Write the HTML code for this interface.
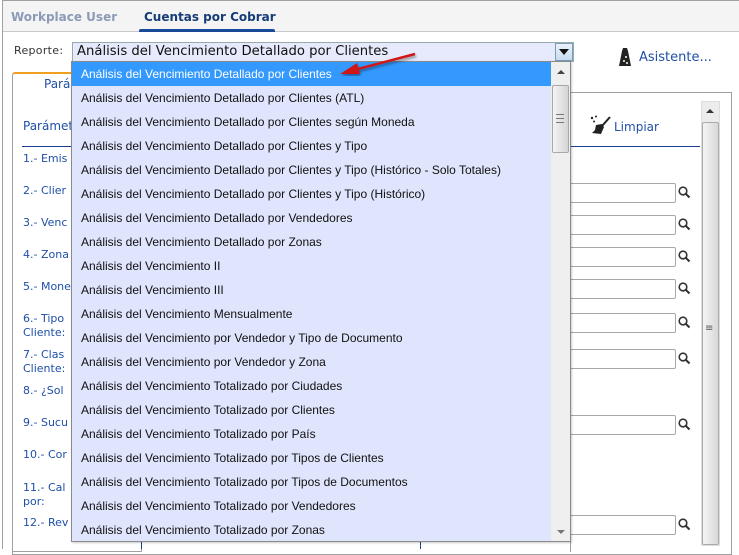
<!DOCTYPE html>
<html><head><meta charset="utf-8"><style>
*{box-sizing:border-box;margin:0;padding:0}
body{width:739px;height:549px;overflow:hidden;background:#fff;position:relative;font-family:"DejaVu Sans",Verdana,sans-serif}
.a{position:absolute}
.lbl{position:absolute;left:23px;font-size:11px;color:#1f4fa8;line-height:14px}
.inp{position:absolute;left:520px;width:156px;height:20px;border:1px solid #a8a8a8;border-radius:2px;background:#fff}
.mag{position:absolute;left:678px}
.it{position:absolute;left:72px;width:479px;height:24px;font-family:"Liberation Sans",Arial,sans-serif;font-size:12px;line-height:25px;padding-left:9px;color:#111;white-space:nowrap}
</style></head><body>
<div class="a" style="left:2px;top:0;width:737px;height:549px;border-left:1px solid #a0a0a0;border-top:1px solid #a0a0a0;background:#fff"></div>
<div class="a" style="left:3px;top:1px;width:736px;height:31px;background:#f4f4f4;border-bottom:1px solid #c8c8c8"></div>
<div class="a" style="left:11px;top:10px;font-size:12px;font-weight:bold;color:#8c9ab8">Workplace User</div>
<div class="a" style="left:144px;top:10px;font-size:12px;font-weight:bold;color:#163c78">Cuentas por Cobrar</div>
<div class="a" style="left:139px;top:29px;width:136px;height:3px;background:#1a4a9a;border-radius:2px 2px 0 0"></div>

<div class="a" style="left:14px;top:44px;font-size:11px;color:#333;letter-spacing:.3px">Reporte:</div>
<div class="a" style="left:72px;top:42px;width:502px;height:20px;border:1px solid #9aa;background:#e6eafc"></div>
<div class="a" style="left:77px;top:44px;font-size:13.2px;color:#111;white-space:nowrap">Análisis del Vencimiento Detallado por Clientes</div>
<div class="a" style="left:555px;top:43px;width:18px;height:18px;border:1px solid #7b9ebd;background:linear-gradient(#eaf2fb,#c7dcef)"></div>
<div class="a" style="left:559px;top:49px;width:0;height:0;border-left:5px solid transparent;border-right:5px solid transparent;border-top:6px solid #111"></div>

<svg class="a" style="left:618px;top:47px" width="14" height="20" viewBox="0 0 14 20"><path d="M5 1h4l1 3 3 15H1L4 4z" fill="#222"/><circle cx="8" cy="10" r="1" fill="#fff"/><circle cx="6" cy="14" r="1" fill="#fff"/><circle cx="9" cy="16" r="1" fill="#fff"/></svg>
<div class="a" style="left:639px;top:50px;font-size:13px;color:#1f4fa8">Asistente...</div>

<div class="a" style="left:12px;top:72px;width:130px;height:480px;border:1px solid #a0a0a0;border-top:2px solid #f0a020;border-radius:3px 3px 0 0"></div>
<div class="a" style="left:44px;top:77px;font-size:12px;color:#1f4fa8">Pará</div>
<div class="a" style="left:12px;top:95px;width:720px;height:460px;border:1px solid #a0a0a0;border-top:none"></div>
<div class="a" style="left:570px;top:92px;width:162px;height:460px;border:1px solid #a0a0a0;border-bottom:none"></div>
<div class="a" style="left:23px;top:119px;font-size:12px;color:#1f4fa8">Parámet</div>
<div class="a" style="left:22px;top:146px;width:678px;height:1px;background:#1a3f8f"></div>
<svg class="a" style="left:590px;top:115px" width="22" height="22" viewBox="0 0 22 22"><path d="M20 2L12 11" stroke="#222" stroke-width="2"/><path d="M6 10l6-1 2 3-3 7-9-1 3-3z" fill="#222"/><circle cx="2" cy="3" r="1.2" fill="#222"/><circle cx="6" cy="1.5" r="1" fill="#222"/><circle cx="4" cy="6.5" r="1" fill="#222"/></svg>
<div class="a" style="left:614px;top:120px;font-size:12px;color:#1f4fa8">Limpiar</div>
<div class="a" style="left:701px;top:101px;width:19px;height:445px;background:#ececec;border:1px solid #ddd"></div>
<div class="a" style="left:706px;top:109px;border-left:4px solid transparent;border-right:4px solid transparent;border-bottom:4px solid #333"></div>
<div class="a" style="left:702px;top:122px;width:17px;height:423px;background:linear-gradient(90deg,#f4f4f4,#d8d8d8);border:1px solid #aaa;border-radius:2px"></div>
<div class="a" style="left:705px;top:327px;font-size:10px;line-height:4px;color:#555">≡</div>
<div class="a" style="left:141px;top:540px;width:1px;height:9px;background:#1a3f8f"></div>
<div class="a" style="left:420px;top:540px;width:1px;height:9px;background:#1a3f8f"></div>

<div class="lbl" style="top:152px">1.- Emis</div>
<div class="lbl" style="top:184px">2.- Clier</div>
<div class="lbl" style="top:216px">3.- Venc</div>
<div class="lbl" style="top:248px">4.- Zona</div>
<div class="lbl" style="top:280px">5.- Mone</div>
<div class="lbl" style="top:312px">6.- Tipo<br>Cliente:</div>
<div class="lbl" style="top:348px">7.- Clas<br>Cliente:</div>
<div class="lbl" style="top:384px">8.- ¿Sol</div>
<div class="lbl" style="top:416px">9.- Sucu</div>
<div class="lbl" style="top:448px">10.- Cor</div>
<div class="lbl" style="top:481px">11.- Cal<br>por:</div>
<div class="lbl" style="top:516px">12.- Rev</div>

<div class="inp" style="top:183px"></div><div class="inp" style="top:215px"></div><div class="inp" style="top:247px"></div>
<div class="inp" style="top:279px"></div><div class="inp" style="top:313px"></div><div class="inp" style="top:349px"></div>
<div class="inp" style="top:415px"></div><div class="inp" style="top:515px"></div>
<svg width="0" height="0"><defs><g id="m"><circle cx="5" cy="5" r="3.8" stroke="#333" stroke-width="1.6" fill="none"/><path d="M7.5 7.5l4 4" stroke="#333" stroke-width="2"/></g></defs></svg>
<svg class="mag" style="top:186px" width="13" height="13"><use href="#m"/></svg>
<svg class="mag" style="top:218px" width="13" height="13"><use href="#m"/></svg>
<svg class="mag" style="top:250px" width="13" height="13"><use href="#m"/></svg>
<svg class="mag" style="top:282px" width="13" height="13"><use href="#m"/></svg>
<svg class="mag" style="top:316px" width="13" height="13"><use href="#m"/></svg>
<svg class="mag" style="top:352px" width="13" height="13"><use href="#m"/></svg>
<svg class="mag" style="top:418px" width="13" height="13"><use href="#m"/></svg>
<svg class="mag" style="top:518px" width="13" height="13"><use href="#m"/></svg>

<div class="a" style="left:71px;top:61px;width:500px;height:481px;background:#dfe5fc;border:1px solid #8a8a8a;box-shadow:1px 1px 2px rgba(0,0,0,.2)"></div>
<div class="it" style="top:62px;background:#3399ff;color:#fff">Análisis del Vencimiento Detallado por Clientes</div>
<div class="it" style="top:86px">Análisis del Vencimiento Detallado por Clientes (ATL)</div>
<div class="it" style="top:110px">Análisis del Vencimiento Detallado por Clientes según Moneda</div>
<div class="it" style="top:134px">Análisis del Vencimiento Detallado por Clientes y Tipo</div>
<div class="it" style="top:158px">Análisis del Vencimiento Detallado por Clientes y Tipo (Histórico - Solo Totales)</div>
<div class="it" style="top:182px">Análisis del Vencimiento Detallado por Clientes y Tipo (Histórico)</div>
<div class="it" style="top:206px">Análisis del Vencimiento Detallado por Vendedores</div>
<div class="it" style="top:230px">Análisis del Vencimiento Detallado por Zonas</div>
<div class="it" style="top:254px">Análisis del Vencimiento II</div>
<div class="it" style="top:278px">Análisis del Vencimiento III</div>
<div class="it" style="top:302px">Análisis del Vencimiento Mensualmente</div>
<div class="it" style="top:326px">Análisis del Vencimiento por Vendedor y Tipo de Documento</div>
<div class="it" style="top:350px">Análisis del Vencimiento por Vendedor y Zona</div>
<div class="it" style="top:374px">Análisis del Vencimiento Totalizado por Ciudades</div>
<div class="it" style="top:398px">Análisis del Vencimiento Totalizado por Clientes</div>
<div class="it" style="top:422px">Análisis del Vencimiento Totalizado por País</div>
<div class="it" style="top:446px">Análisis del Vencimiento Totalizado por Tipos de Clientes</div>
<div class="it" style="top:470px">Análisis del Vencimiento Totalizado por Tipos de Documentos</div>
<div class="it" style="top:494px">Análisis del Vencimiento Totalizado por Vendedores</div>
<div class="it" style="top:518px">Análisis del Vencimiento Totalizado por Zonas</div>
<div class="a" style="left:551px;top:62px;width:19px;height:479px;background:#efefef"></div>
<div class="a" style="left:557px;top:70px;border-left:4px solid transparent;border-right:4px solid transparent;border-bottom:4px solid #444"></div>
<div class="a" style="left:557px;top:530px;border-left:4px solid transparent;border-right:4px solid transparent;border-top:4px solid #777"></div>
<div class="a" style="left:552px;top:85px;width:17px;height:68px;background:linear-gradient(90deg,#f4f4f4,#d4d4d4);border:1px solid #a8a8a8;border-radius:2px"></div>
<div class="a" style="left:556px;top:114px;width:8px;height:9px;border-top:1px solid #777;border-bottom:1px solid #777"></div>
<div class="a" style="left:556px;top:118px;width:8px;height:1px;background:#777"></div>

<svg class="a" style="left:330px;top:48px" width="95" height="35"><defs><filter id="s"><feDropShadow dx="1" dy="2" stdDeviation="1.2" flood-opacity=".4"/></filter></defs><g filter="url(#s)"><path d="M85 6L24 22" stroke="#d01818" stroke-width="2.5"/><path d="M10 26l17-11 3 11z" fill="#d01818"/></g></svg>
</body></html>
